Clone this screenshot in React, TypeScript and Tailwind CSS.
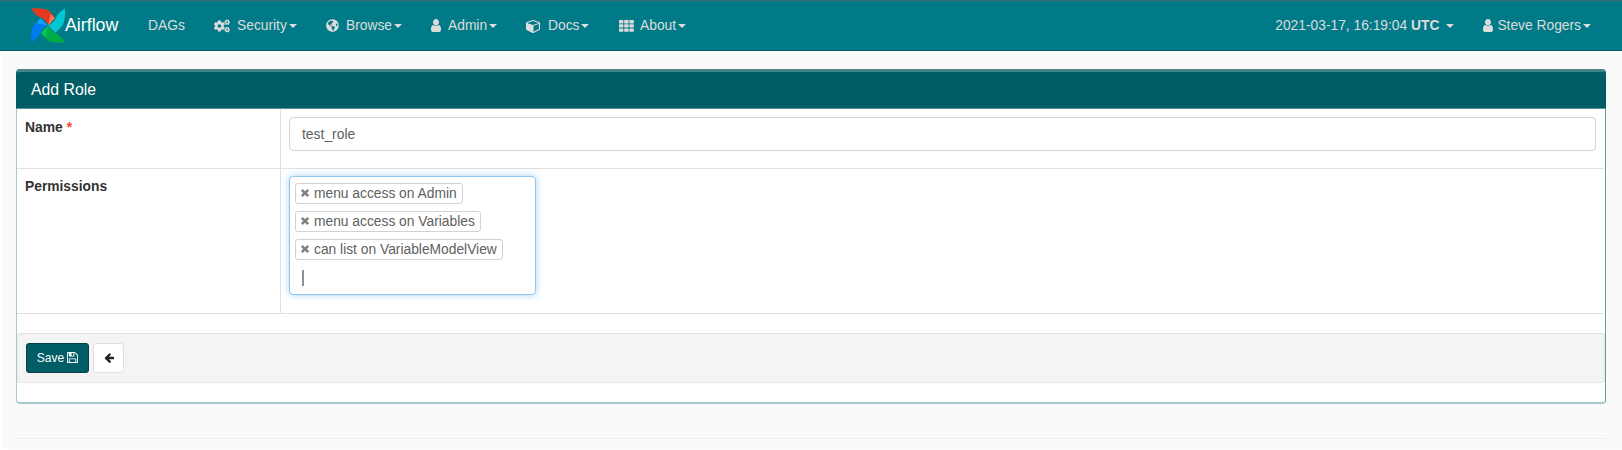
import type { ReactNode } from "react";
import { FaCogs, FaGlobeAmericas } from "react-icons/fa";

const USER =
  "M1536 1399q0 109-62.5 187t-150.5 78h-854q-88 0-150.5-78t-62.5-187q0-85 8.5-160.5t31.5-152 58.5-131 94-89 134.500-34.500q131 128 313 128t313-128q76 0 134.500 34.500t94 89 58.5 131 31.5 152 8.5 160.5zm-256-887q0 159-112.5 271.5t-271.5 112.5-271.5-112.5-112.5-271.5 112.5-271.5 271.5-112.5 271.5 112.5 112.5 271.5z";
const CUBE =
  "M896 1629l640-349v-636l-640 233v752zm-64-865l698-254-698-254-698 254zm832-252v768q0 35-18 65t-49 47l-704 384q-28 16-61 16t-61-16l-704-384q-31-17-49-47t-18-65v-768q0-40 23-73t61-47l704-256q22-8 44-8t44 8l704 256q38 14 61 47t23 73z";
const FLOPPY =
  "M512 1536h768v-384h-768v384zm896 0h128v-896q0-14-10-38.5t-20-34.5l-281-281q-10-10-34-20t-39-10v416q0 40-28 68t-68 28h-576q-40 0-68-28t-28-68v-416h-128v1280h128v-416q0-40 28-68t68-28h832q40 0 68 28t28 68v416zm-384-928v-320q0-13-9.5-22.5t-22.5-9.5h-192q-13 0-22.5 9.5t-9.5 22.5v320q0 13 9.5 22.5t22.5 9.5h192q13 0 22.5-9.5t9.5-22.5zm640 32v928q0 40-28 68t-68 28h-1344q-40 0-68-28t-28-68v-1344q0-40 28-68t68-28h928q40 0 88 20t76 48l280 280q28 28 48 76t20 88z";
const ARROW =
  "M1664 896v128q0 53-32.5 90.5t-84.5 37.5h-704l293 294q38 36 38 90t-38 90l-75 76q-37 37-90 37-52 0-91-37l-651-652q-37-37-37-90 0-52 37-91l651-650q38-38 91-38 52 0 90 38l75 74q38 38 38 91t-38 91l-293 293h704q52 0 84.5 37.5t32.5 90.5z";

function Glyph({ d, className, box = "0 0 1792 1792" }: { d: string; className: string; box?: string }) {
  return (
    <svg viewBox={box} preserveAspectRatio="none" fill="currentColor" className={`shrink-0 ${className}`}>
      <path d={d} />
    </svg>
  );
}

function Caret() {
  return (
    <svg viewBox="0 0 8 4" className="mt-px ml-0.5 h-1 w-2 shrink-0" fill="currentColor">
      <path d="M0 0h8L4 4z" />
    </svg>
  );
}

function GridIcon() {
  return (
    <svg viewBox="0 0 15 12" className="h-3 w-[15px]" fill="currentColor">
      {[0, 4.2, 8.4].map((y) =>
        [0, 5.2, 10.4].map((x) => <rect key={`${x}-${y}`} x={x} y={y} width="4.4" height="3.4" rx=".5" />),
      )}
    </svg>
  );
}

function Pinwheel() {
  return (
    <svg viewBox="0 0 34 35" className="h-[35px] w-[34px] shrink-0">
      <path d="M0 .5Q12-.5 17.500 2.500Q21 5 24 10L17 17.500Q15 11 7.500 8.500Q4.500 7 0 .5z" fill="#e43921" />
      <path d="M24 10L17 17.500L19.500 6z" fill="#ff7557" />
      <path d="M34 .5Q34.500 12 31.500 17.500Q28.500 21.500 24.500 24.500L17 17.500Q23 15 25.500 8.500Q27.500 4.500 34 .5z" fill="#00c7d4" />
      <path d="M24.500 24.500L17 17.500L28.500 20z" fill="#11c1ce" />
      <path d="M34 34.500Q22.500 35 17 32.500Q13 29.500 10 25L17 17.500Q19.500 23.500 26 26Q30 28 34 34.500z" fill="#00ad46" />
      <path d="M10 25L17 17.500L14.500 29z" fill="#04c653" />
      <path d="M0 34.500Q-.5 23 2.500 17.500Q5.500 13.500 9.500 10.500L17 17.500Q11 20 8.500 26.500Q6.500 30.500 0 34.500z" fill="#017cee" />
      <path d="M9.500 10.500L17 17.500L5.500 15z" fill="#0ca6ff" />
    </svg>
  );
}

function NavItem({ icon, label, className }: { icon: ReactNode; label: string; className: string }) {
  return (
    <a className={`flex shrink-0 items-center ${className}`}>
      <span className="flex w-[23px] shrink-0 items-center">{icon}</span>
      {label}
      <Caret />
    </a>
  );
}

function Tag({ label }: { label: string }) {
  return (
    <li className="flex h-[21px] w-fit items-center rounded-[3px] border border-[#d2d2d2] bg-white pr-[5px] pl-[5px] text-[13.8px] leading-5 text-[#606060]">
      <svg viewBox="0 0 8 8" className="relative -top-px mr-[5px] h-2 w-2">
        <path d="M.8 1l6.400 6M7.200 1L.8 7" stroke="#808080" strokeWidth="2.400" fill="none" />
      </svg>
      {label}
    </li>
  );
}

export default function App() {
  return (
    <div className="h-[450px] w-[1622px] overflow-hidden bg-white pl-px font-['Liberation_Sans',Arial,sans-serif] text-[13.9px] leading-5 text-[#333]">
      <div className="-ml-px flex h-[51px] items-center border-t border-b border-t-[#3e6a6b] border-b-[#00606a] bg-[#017a87] pl-[31px] text-[13.8px] text-[#dcdcdc]">
        <div className="flex w-[117px] shrink-0 items-center text-[17.8px] text-white">
          <Pinwheel />
          <span className="-mt-px">Airflow</span>
        </div>
        <a className="w-[37px]">DAGs</a>
        <NavItem className="ml-[29px] w-[83px]" icon={<FaCogs className="h-3.5 w-4" />} label="Security" />
        <NavItem
          className="ml-[29px] w-[76px] [&>span]:w-5"
          icon={<FaGlobeAmericas className="h-[13px] w-[13px]" />}
          label="Browse"
        />
        <NavItem
          className="ml-[29px] w-[66px] [&>span]:w-[17px]"
          icon={<Glyph d={USER} box="256 128 1280 1536" className="h-[13px] w-2.5" />}
          label="Admin"
        />
        <NavItem
          className="ml-[29px] w-[64px] [&>span]:w-[22px]"
          icon={<Glyph d={CUBE} box="0 0 1664 1792" className="h-3.5 w-3.5" />}
          label="Docs"
        />
        <NavItem className="ml-[29px] [&>span]:w-[21px]" icon={<GridIcon />} label="About" />
        <div className="ml-auto flex items-center">
          2021-03-17, 16:19:04&nbsp;<b>UTC</b>
          <span className="flex pl-[5px]">
            <Caret />
          </span>
        </div>
        <div className="mr-[31px] ml-[29px] flex items-center">
          <Glyph d={USER} box="256 128 1280 1536" className="mr-1 h-[13px] w-2.5" />
          Steve Rogers
          <Caret />
        </div>
      </div>

      <main className="h-[398px] bg-[#fafafa] pt-[18px] pr-4 pl-[15px]">
        <section className="h-[335px] w-[1590px] rounded border border-r-[#679d9f] border-b-2 border-[#a9c9cf] bg-white">
          <h4 className="-mx-px -mt-px flex h-10 items-center rounded-t border-t-3 border-b border-t-[#458488] border-b-[#559397] bg-[#005d66] pb-px pl-[15px] text-[15.8px] text-white">
            Add Role
          </h4>
          <div className="grid grid-cols-[264px_1fr] pr-px">
            <div className="h-[60px] border-r border-b border-[#e0e0e0] pt-2 pl-2 font-bold">
              Name <span className="text-[#ff3b3b]">*</span>
            </div>
            <div className="border-b border-[#e0e0e0] pt-2 pr-2 pl-2">
              <div className="flex h-[34px] items-center rounded border border-[#d4d4d4] pl-3 text-[#606060]">test_role</div>
            </div>
            <div className="h-[145px] border-r border-b border-[#e0e0e0] pt-2 pl-2 text-[13.8px] font-bold">Permissions</div>
            <div className="border-b border-[#e0e0e0] pt-[7px] pl-2">
              <ul className="flex h-[119px] w-[247px] flex-col gap-[7px] rounded border border-[#93c6ee] bg-white pt-[6px] pl-[5px] shadow-[0_0_7px_rgba(82,168,236,0.5)]">
                <Tag label="menu access on Admin" />
                <Tag label="menu access on Variables" />
                <Tag label="can list on VariableModelView" />
                <li className="mt-[3px] ml-[7px] h-4 w-0.5 bg-[#909090]" />
              </ul>
            </div>
          </div>
          <div className="mt-[19px] flex h-[50px] items-center gap-1 rounded-[3px] border border-[#e6e6e6] border-t-[#dfdfdf] bg-[#f4f4f4] pl-[8px] text-[12px]">
            <button className="flex h-[30px] w-[63px] items-center justify-center gap-[3px] rounded-[3px] border border-[#053d43] bg-[#005d66] pb-px text-white">
              Save
              <Glyph d={FLOPPY} box="128 128 1536 1536" className="h-[11px] w-[11px]" />
            </button>
            <button className="flex h-[30px] w-[31px] items-center justify-center rounded-[3px] border border-[#e0e0e0] bg-white pb-px text-[#222]">
              <Glyph d={ARROW} box="64 150 1600 1600" className="h-2.5 w-2.5" />
            </button>
          </div>
        </section>
        <hr className="mt-[34px] w-[1590px] border-[#eee]" />
      </main>
    </div>
  );
}
